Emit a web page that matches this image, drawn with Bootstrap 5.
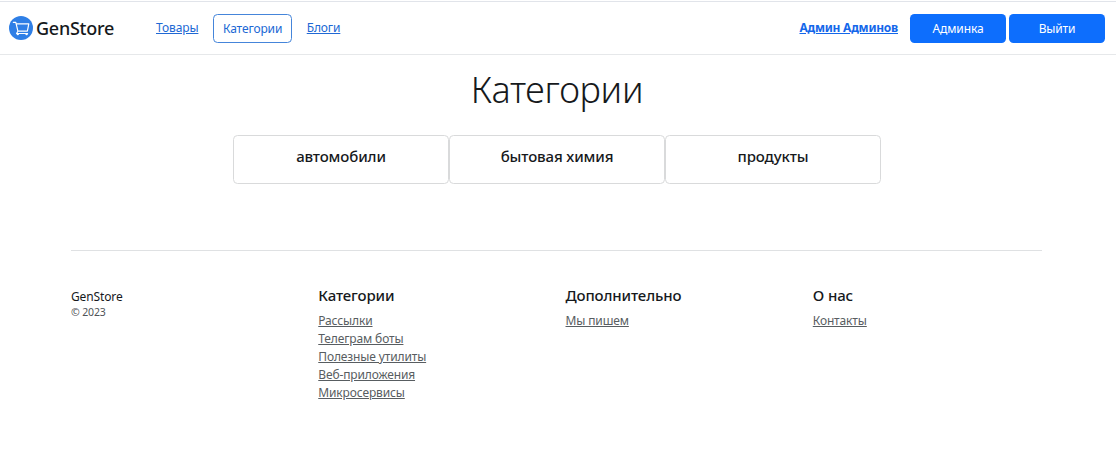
<!DOCTYPE html>
<html lang="ru">
<head>
<meta charset="utf-8">
<meta name="viewport" content="width=device-width, initial-scale=1">
<title>GenStore</title>
<link href="https://cdn.jsdelivr.net/npm/bootstrap@5.3.0/dist/css/bootstrap.min.css" rel="stylesheet">
<style>
html{font-size:12px}
body{font-family:"Noto Sans","Open Sans",sans-serif;color:#16191c;letter-spacing:-.13px}
.site-header{height:54px;border-top:1px solid #e1e4ea;border-bottom:1px solid #e6e8ea;margin-top:1px;padding:0 11px 0 9px}
.brand{font-size:18px;font-weight:500;letter-spacing:-.26px;color:#16191c;line-height:24px}
.brand svg{margin-right:3px}
.menu{margin-left:42px;gap:15px}
.menu a{color:#2068d4;line-height:18px}
.menu a.plain{padding-bottom:1px}
.menu a.current{border:1px solid #4585da;border-radius:4.5px;padding:5px 8.5px 4px;height:29px;text-decoration:none}
.user-link{font-weight:700;color:#1467ea;letter-spacing:-.24px;margin-right:12px}
.btn-main{width:96px;height:29px;font-size:12px;line-height:18px;padding:6px 0 4px;border:0;border-radius:4.5px;background:#0d6efd;color:#fff}
.btn-main + .btn-main{margin-left:3px}
.page{width:972px;margin-left:71px}
h1.page-title{font-size:36px;font-weight:300;line-height:43px;letter-spacing:-.3px;margin:13px 0 24px}
.category{width:216px;height:49px;border:1px solid #d9dadb;border-radius:4.5px;padding-top:11px}
.category h2,.foot h2{font-size:15px;font-weight:500;line-height:18px;margin:0}
.foot{margin-top:66px;padding-top:37px;border-top:1px solid #dfe1e3}
.foot.page{width:971px}
.foot .row{--bs-gutter-x:18px}
.foot h2{line-height:15px;margin-bottom:9px}
.foot ul a{color:#585d61;line-height:18px}
.owner{line-height:18px}
.copy{font-size:10.5px;line-height:13px;color:#4f5357}
</style>
</head>
<body>
<header class="site-header d-flex align-items-center">
  <a class="d-flex align-items-center text-decoration-none brand" href="#">
    <svg width="24" height="24" viewBox="0 0 24 24" fill="none" aria-hidden="true">
      <circle cx="12" cy="12" r="12" fill="#2f7fe6"/>
      <path d="M4.3 6.3h2.5l2.1 8.9h9.3M7.2 7.8H19.8l-1.4 7.2M8.9 15.2l-1.3 2.3h11" stroke="#fff" stroke-width="1.2" stroke-linecap="round" stroke-linejoin="round"/>
      <circle cx="8.8" cy="18.1" r="1.2" fill="#fff"/><circle cx="17.6" cy="18.1" r="1.2" fill="#fff"/>
    </svg>
    <span>GenStore</span>
  </a>
  <nav class="menu d-flex align-items-center me-auto">
    <a class="plain" href="#">Товары</a>
    <a class="current" href="#">Категории</a>
    <a class="plain" href="#">Блоги</a>
  </nav>
  <a class="user-link" href="#">Админ Админов</a>
  <a class="btn btn-primary btn-main" href="#">Админка</a>
  <a class="btn btn-primary btn-main" href="#">Выйти</a>
</header>
<main class="page">
  <h1 class="page-title text-center">Категории</h1>
  <div class="d-flex justify-content-center">
    <div class="category text-center"><h2>автомобили</h2></div>
    <div class="category text-center"><h2>бытовая химия</h2></div>
    <div class="category text-center"><h2>продукты</h2></div>
  </div>
</main>
<footer class="page foot">
  <div class="row">
    <div class="col-3"><div class="owner">GenStore</div><div class="copy">© 2023</div></div>
    <div class="col-3">
      <h2>Категории</h2>
      <ul class="list-unstyled mb-0">
        <li><a href="#">Рассылки</a></li>
        <li><a href="#">Телеграм боты</a></li>
        <li><a href="#">Полезные утилиты</a></li>
        <li><a href="#">Веб-приложения</a></li>
        <li><a href="#">Микросервисы</a></li>
      </ul>
    </div>
    <div class="col-3">
      <h2>Дополнительно</h2>
      <ul class="list-unstyled mb-0"><li><a href="#">Мы пишем</a></li></ul>
    </div>
    <div class="col-3">
      <h2>О нас</h2>
      <ul class="list-unstyled mb-0"><li><a href="#">Контакты</a></li></ul>
    </div>
  </div>
</footer>
<script src="https://cdn.jsdelivr.net/npm/bootstrap@5.3.0/dist/js/bootstrap.bundle.min.js"></script>
</body>
</html>
